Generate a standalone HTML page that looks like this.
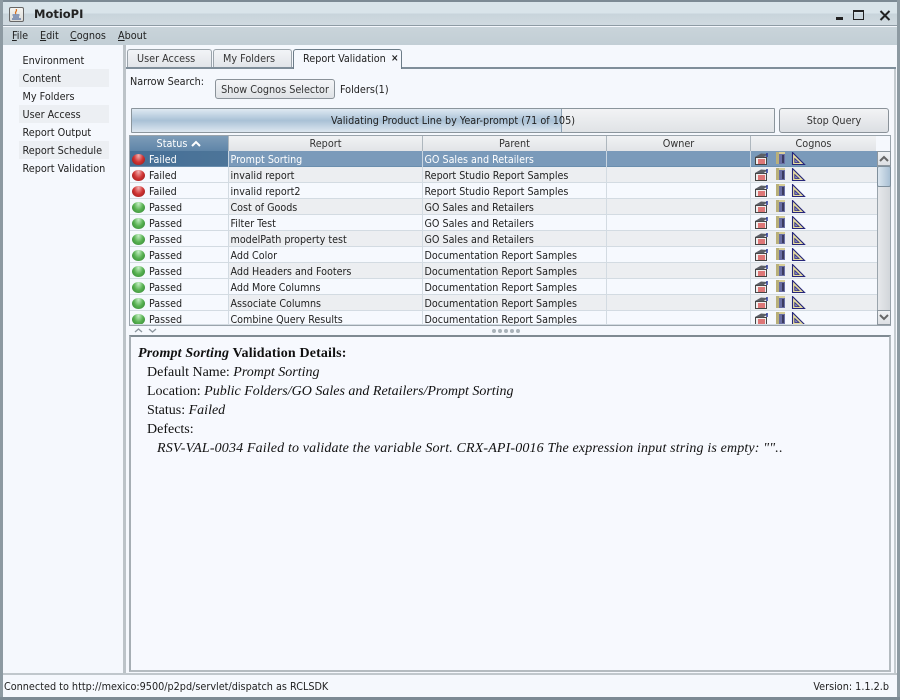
<!DOCTYPE html>
<html><head><meta charset="utf-8"><style>
html,body{margin:0;padding:0;width:900px;height:700px;overflow:hidden;background:#f5f8fd}
*{box-sizing:border-box}
body{font-family:"DejaVu Sans Condensed","DejaVu Sans","Liberation Sans",sans-serif;font-stretch:condensed;font-size:10.75px;color:#222;position:relative}
.a{position:absolute;white-space:nowrap}
.nav{position:absolute;left:19px;width:90px;height:18px;line-height:19px;padding-left:3.5px;white-space:nowrap}
.nav.g{background:#eceff3}
.tab{position:absolute;top:49px;height:18px;line-height:17px;background:linear-gradient(#f2f4f7,#e2e5e9);border:1px solid #9aa3aa;border-bottom:0;border-radius:3px 3px 0 0;color:#333;padding-left:9px;white-space:nowrap}
.row{position:absolute;left:130px;width:747px;height:16px;border-bottom:1px solid #d3dbe2;background:#f6f9fe;line-height:17px;font-size:10.65px}
.row.e{background:linear-gradient(90deg,#f6f9fe 98px,#eceef1 98px)}
.row.s{color:#fff;border-bottom-color:#6a8eae}
.row span{position:absolute;top:0}
.row i{position:absolute;top:0;bottom:-1px;width:1px;background:#d3dbe2}
.row.s i{background:#c9d6e2}
.row .c1{left:19px}.row .c2{left:100.5px}.row .c3{left:294.5px}
.dot{position:absolute;left:2px;top:3px;width:13px;height:11px;border-radius:50%}
.dot.r{background:radial-gradient(ellipse at 50% 15%,#f2b0b0,#d03434 50%,#8e1616 100%)}
.dot.p{background:radial-gradient(ellipse at 50% 15%,#c5eec5,#58b252 50%,#2f802f 100%)}
.row svg{position:absolute;left:625px;top:1px}
.hd{position:absolute;top:136px;height:15px;line-height:16px;text-align:center;background:linear-gradient(#f1f2f4,#e2e4e7);border-right:1px solid #aeb7be;color:#333}
.btn{position:absolute;background:linear-gradient(#f4f5f7,#dfe2e6);border:1px solid #8a9299;border-radius:3px;text-align:center;color:#333}
.det{font-family:"Liberation Serif",serif;font-size:14px;color:#111;position:absolute;white-space:nowrap}
</style></head><body>
<svg width="0" height="0" style="position:absolute"><defs>
<g id="ic">
<rect x="0.5" y="5.5" width="11" height="7" fill="#f0eeee" stroke="#444"/><rect x="3" y="7" width="7" height="5" fill="#d77"/><path d="M0 5 L6 1.5 L13 2 L8 5.5Z" fill="#5c5f66"/><path d="M12 1v4" stroke="#2a3a9a" stroke-width="1.5"/>
<rect x="21" y="0" width="9" height="12" fill="#6a6fa5"/><rect x="21" y="0" width="3" height="12" fill="#b9b07a"/><rect x="24" y="0" width="6" height="2" fill="#d8cf98"/><rect x="27" y="3" width="2" height="8" fill="#3c3c60"/>
<path d="M37.5 .5 V12.5 H49.5Z" fill="#e6dca0" stroke="#26267a" stroke-width="1.1"/><path d="M39.8 6.5 V10.5 H44Z" fill="#8a88c8" stroke="#26267a" stroke-width=".8"/>
</g></defs></svg>

<!-- window frame -->
<div class="a" style="left:0;top:0;width:900px;height:2px;background:#7c8a94"></div>
<div class="a" style="left:0;top:0;width:3px;height:700px;background:#8d9aa2"></div>
<div class="a" style="right:0;top:0;width:3px;height:700px;background:#8d9aa2"></div>
<div class="a" style="left:0;bottom:0;width:900px;height:3px;background:#7c8a94"></div>
<!-- title -->
<div class="a" style="left:3px;top:2px;width:894px;height:24px;background:linear-gradient(#d9e4ea 0,#d9e4ea 11px,#c8d4db 12px,#d0dae0 100%);border-bottom:1px solid #8e9ba4"></div>
<div class="a" style="left:9px;top:7px;width:15px;height:15px;background:linear-gradient(#f4f4f2,#dcdcd8);border:1px solid #666;border-radius:2px"></div>
<svg class="a" style="left:11px;top:9px" width="11" height="11"><path d="M5 0 C7 2 3 3 5 5" fill="none" stroke="#d8701c" stroke-width="1.2"/><path d="M1.5 6 h7 M2 8 h6 M1 10 h9" stroke="#2f4f8f" stroke-width="1"/></svg>
<div class="a" style="left:34px;top:7px;font-family:'DejaVu Sans',sans-serif;font-stretch:normal;font-size:11.5px;font-weight:bold;line-height:15px;color:#222">MotioPI</div>
<div class="a" style="left:836px;top:17px;width:7px;height:3px;background:#222"></div>
<div class="a" style="left:853px;top:10px;width:11px;height:10px;border:1px solid #222;border-top-width:2px"></div>
<svg class="a" style="left:879px;top:10px" width="12" height="11"><path d="M1.5 1 L10.5 10 M10.5 1 L1.5 10" stroke="#222" stroke-width="2"/></svg>
<!-- menu -->
<div class="a" style="left:3px;top:27px;width:894px;height:18px;background:linear-gradient(#c9d4da,#c2ced5)"></div>
<div class="a" style="left:12px;top:29px;line-height:14px;color:#222"><u>F</u>ile</div>
<div class="a" style="left:40px;top:29px;line-height:14px;color:#222"><u>E</u>dit</div>
<div class="a" style="left:70px;top:29px;line-height:14px;color:#222"><u>C</u>ognos</div>
<div class="a" style="left:118px;top:29px;line-height:14px;color:#222"><u>A</u>bout</div>
<!-- left nav -->
<div class="a" style="left:4px;top:45px;width:121px;height:630px;background:#f5f8fd"></div>
<div class="a" style="left:123px;top:45px;width:3px;height:630px;background:#bcc3c8"></div>
<div class="nav" style="top:51px">Environment</div>
<div class="nav g" style="top:69px">Content</div>
<div class="nav" style="top:87px">My Folders</div>
<div class="nav g" style="top:105px">User Access</div>
<div class="nav" style="top:123px">Report Output</div>
<div class="nav g" style="top:141px">Report Schedule</div>
<div class="nav" style="top:159px">Report Validation</div>
<!-- tabs -->
<div class="a" style="left:126px;top:67px;width:770px;height:2px;background:#7f8e9a"></div>
<div class="tab" style="left:127px;width:85px">User Access</div>
<div class="tab" style="left:213px;width:79px">My Folders</div>
<div class="tab" style="left:293px;width:109px;height:20px;background:#f5f8fd;border-color:#6c7c88;color:#222;z-index:2">Report Validation<span style="position:absolute;left:97px;top:0;font-size:10px;font-weight:bold">×</span></div>
<div class="a" style="left:894px;top:69px;width:2px;height:604px;background:#c4cbd0"></div>
<div class="a" style="left:130px;top:75px;line-height:14px">Narrow Search:</div>
<div class="btn" style="left:215px;top:79px;width:120px;height:20px;line-height:19px">Show Cognos Selector</div>
<div class="a" style="left:340px;top:83px;line-height:14px">Folders(1)</div>
<!-- progress -->
<div class="a" style="left:131px;top:108px;width:644px;height:25px;background:linear-gradient(#f2f3f5,#e0e3e6);border:1px solid #8b959c;border-radius:1px"></div>
<div class="a" style="left:132px;top:109px;width:430px;height:23px;background:linear-gradient(#dfe9f2,#a9c1d6 50%,#dde7f0);border-right:1px solid #8ba1b5"></div>
<div class="a" style="left:131px;top:114px;width:644px;text-align:center;line-height:14px;color:#222">Validating Product Line by Year-prompt (71 of 105)</div>
<div class="btn" style="left:779px;top:108px;width:110px;height:25px;line-height:24px;background:linear-gradient(#f2f3f5,#dcdfe3)">Stop Query</div>
<!-- table header -->
<div class="a" style="left:129px;top:135px;width:762px;height:191px;border:1px solid #9aa4ac;border-bottom:0"></div>
<div class="hd" style="left:130px;width:99px;background:linear-gradient(#7d9cb8,#5f85a8);color:#fff">Status <svg width="10" height="7" style="margin-left:1px"><path d="M1 6 L5 2 L9 6" fill="none" stroke="#fff" stroke-width="2"/></svg></div>
<div class="hd" style="left:229px;width:194px">Report</div>
<div class="hd" style="left:423px;width:184px">Parent</div>
<div class="hd" style="left:607px;width:144px">Owner</div>
<div class="hd" style="left:751px;width:125px;border-right:0">Cognos</div>
<!-- rows -->
<div class="row s" style="top:151px;background:linear-gradient(90deg,#456f96 0,#4d7599 98px,#7a9aba 99px,#7a9aba 100%)"><b class="dot r"></b><span class="c1">Failed</span><i style="left:98px"></i><i style="left:292px"></i><i style="left:476px"></i><i style="left:620px"></i><span class="c2">Prompt Sorting</span><span class="c3">GO Sales and Retailers</span><svg width="52" height="14"><use href="#ic"/></svg></div>
<div class="row e" style="top:167px"><b class="dot r"></b><span class="c1">Failed</span><i style="left:98px"></i><i style="left:292px"></i><i style="left:476px"></i><i style="left:620px"></i><span class="c2">invalid report</span><span class="c3">Report Studio Report Samples</span><svg width="52" height="14"><use href="#ic"/></svg></div>
<div class="row" style="top:183px"><b class="dot r"></b><span class="c1">Failed</span><i style="left:98px"></i><i style="left:292px"></i><i style="left:476px"></i><i style="left:620px"></i><span class="c2">invalid report2</span><span class="c3">Report Studio Report Samples</span><svg width="52" height="14"><use href="#ic"/></svg></div>
<div class="row e" style="top:199px"><b class="dot p"></b><span class="c1">Passed</span><i style="left:98px"></i><i style="left:292px"></i><i style="left:476px"></i><i style="left:620px"></i><span class="c2">Cost of Goods</span><span class="c3">GO Sales and Retailers</span><svg width="52" height="14"><use href="#ic"/></svg></div>
<div class="row" style="top:215px"><b class="dot p"></b><span class="c1">Passed</span><i style="left:98px"></i><i style="left:292px"></i><i style="left:476px"></i><i style="left:620px"></i><span class="c2">Filter Test</span><span class="c3">GO Sales and Retailers</span><svg width="52" height="14"><use href="#ic"/></svg></div>
<div class="row e" style="top:231px"><b class="dot p"></b><span class="c1">Passed</span><i style="left:98px"></i><i style="left:292px"></i><i style="left:476px"></i><i style="left:620px"></i><span class="c2">modelPath property test</span><span class="c3">GO Sales and Retailers</span><svg width="52" height="14"><use href="#ic"/></svg></div>
<div class="row" style="top:247px"><b class="dot p"></b><span class="c1">Passed</span><i style="left:98px"></i><i style="left:292px"></i><i style="left:476px"></i><i style="left:620px"></i><span class="c2">Add Color</span><span class="c3">Documentation Report Samples</span><svg width="52" height="14"><use href="#ic"/></svg></div>
<div class="row e" style="top:263px"><b class="dot p"></b><span class="c1">Passed</span><i style="left:98px"></i><i style="left:292px"></i><i style="left:476px"></i><i style="left:620px"></i><span class="c2">Add Headers and Footers</span><span class="c3">Documentation Report Samples</span><svg width="52" height="14"><use href="#ic"/></svg></div>
<div class="row" style="top:279px"><b class="dot p"></b><span class="c1">Passed</span><i style="left:98px"></i><i style="left:292px"></i><i style="left:476px"></i><i style="left:620px"></i><span class="c2">Add More Columns</span><span class="c3">Documentation Report Samples</span><svg width="52" height="14"><use href="#ic"/></svg></div>
<div class="row e" style="top:295px"><b class="dot p"></b><span class="c1">Passed</span><i style="left:98px"></i><i style="left:292px"></i><i style="left:476px"></i><i style="left:620px"></i><span class="c2">Associate Columns</span><span class="c3">Documentation Report Samples</span><svg width="52" height="14"><use href="#ic"/></svg></div>
<div class="row" style="top:311px;height:14px;overflow:hidden"><b class="dot p"></b><span class="c1">Passed</span><i style="left:98px"></i><i style="left:292px"></i><i style="left:476px"></i><i style="left:620px"></i><span class="c2">Combine Query Results</span><span class="c3">Documentation Report Samples</span><svg width="52" height="14"><use href="#ic"/></svg></div>
<div class="a" style="left:129px;top:325px;width:762px;height:1px;background:#9aa4ac"></div>
<!-- scrollbar -->
<div class="a" style="left:877px;top:151px;width:14px;height:175px;background:linear-gradient(90deg,#e6e8eb,#d2d6da);border:1px solid #9aa4ac"></div>
<div class="a" style="left:877px;top:151px;width:14px;height:15px;background:linear-gradient(#f0f2f4,#dde0e4);border:1px solid #8d979f"></div>
<svg class="a" style="left:879px;top:155px" width="10" height="7"><path d="M1 6 L5 2 L9 6" fill="none" stroke="#666" stroke-width="2"/></svg>
<div class="a" style="left:877px;top:166px;width:14px;height:21px;background:linear-gradient(90deg,#dbe6ef,#a9c0d4);border:1px solid #7f8f9c;border-radius:2px"></div>
<div class="a" style="left:877px;top:310px;width:14px;height:15px;background:linear-gradient(#f0f2f4,#dde0e4);border:1px solid #8d979f"></div>
<svg class="a" style="left:879px;top:314px" width="10" height="7"><path d="M1 1 L5 5 L9 1" fill="none" stroke="#666" stroke-width="2"/></svg>
<!-- splitter -->
<svg class="a" style="left:134px;top:327px" width="24" height="7"><path d="M1 5 L4.5 2 L8 5 M15 2 L18.5 5 L22 2" fill="none" stroke="#8a949c" stroke-width="1.3"/></svg>
<div class="a" style="left:492px;top:329px;width:4px;height:4px;background:#a9b2b9;border-radius:50%;box-shadow:6px 0 #a9b2b9,12px 0 #a9b2b9,18px 0 #a9b2b9,24px 0 #a9b2b9"></div>
<!-- details -->
<div class="a" style="left:129px;top:335px;width:762px;height:337px;border:2px solid #a6aeb4;border-color:#7f8a92 #b4bbc0 #b4bbc0 #a6aeb4;background:#f7f9fe"></div>
<div class="det" style="left:138px;top:346px;line-height:16px;font-weight:bold;letter-spacing:.15px"><i>Prompt Sorting</i> Validation Details:</div>
<div class="det" style="left:147px;top:365px;line-height:16px">Default Name: <i>Prompt Sorting</i></div>
<div class="det" style="left:147px;top:384px;line-height:16px">Location: <i>Public Folders/GO Sales and Retailers/Prompt Sorting</i></div>
<div class="det" style="left:147px;top:403px;line-height:16px">Status: <i>Failed</i></div>
<div class="det" style="left:147px;top:422px;line-height:16px">Defects:</div>
<div class="det" style="left:157px;top:441px;line-height:16px;letter-spacing:.145px"><i>RSV-VAL-0034 Failed to validate the variable Sort. CRX-API-0016 The expression input string is empty: "".</i>.</div>
<!-- status bar -->
<div class="a" style="left:3px;top:675px;width:894px;height:22px;background:#f5f8fd"></div>
<div class="a" style="left:3px;top:673px;width:894px;height:2px;background:#c0c7cc"></div>
<div class="a" style="left:4px;top:680px;line-height:14px">Connected to http://mexico:9500/p2pd/servlet/dispatch as RCLSDK</div>
<div class="a" style="right:11px;top:680px;line-height:14px">Version: 1.1.2.b</div>
</body></html>
